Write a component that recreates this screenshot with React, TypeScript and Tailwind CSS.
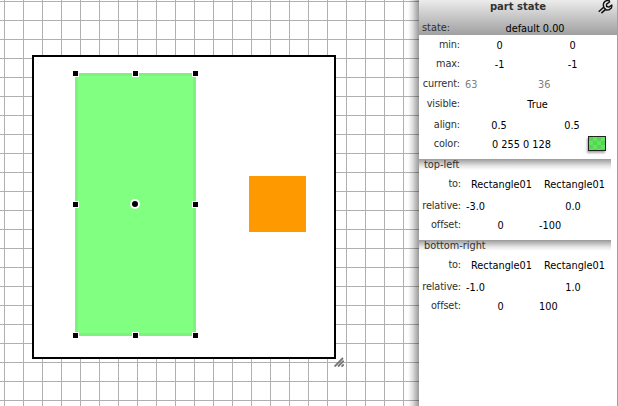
import React from "react";

type Align = "left" | "center";
type Value = { text: string; align?: Align; muted?: boolean; shift?: string };

function Cell({ text, align = "center", muted, shift = "" }: Value) {
  return (
    <span className={`whitespace-pre ${align === "left" ? "pl-[3px] text-left" : "text-center"} ${muted ? "text-[#808080]" : "text-black"} ${shift}`}>
      {text}
    </span>
  );
}

function Row({ label, values, height, wide }: { label: string; values: Value[]; height: string; wide?: boolean }) {
  return (
    <div className={`grid ${wide ? "grid-cols-[41px_149px]" : "grid-cols-[41px_73px_73px]"} gap-x-[3px] leading-[12px] ${height}`}>
      <span className="-mt-px justify-self-end whitespace-nowrap tracking-[-0.15px] text-[#303030]">{label}</span>
      {wide ? (
        values.map((v, i) => <Cell key={i} {...v} />)
      ) : (
        <div className="col-span-2 grid w-[146px] grid-cols-2">
          {values.map((v, i) => <Cell key={i} {...v} />)}
        </div>
      )}
    </div>
  );
}

function Section({ title, children }: { title: string; children: React.ReactNode }) {
  return (
    <section className="h-[81px] shrink-0">
      <div className="h-[20px] w-[192px] bg-[linear-gradient(to_bottom,#999_0,#bbb_3px,#e6e6e6_7px,#fff_11px)] pl-[5px] leading-[12px] text-[#303030]">
        {title}
      </div>
      <div className="pl-px">{children}</div>
    </section>
  );
}

function Handle({ pos }: { pos: string }) {
  return <i className={`absolute size-[7px] border border-white bg-black ${pos}`} />;
}

function Canvas() {
  return (
    <div className="relative h-full w-[419px] shrink-0 overflow-hidden bg-white bg-[linear-gradient(to_right,#b0b0b0_1px,transparent_1px),linear-gradient(to_bottom,#b0b0b0_1px,transparent_1px)] bg-[size:19px_19px] bg-[position:4px_1px]">
      <div className="absolute top-[55px] left-[32px] size-[304px] border-2 border-black bg-white" />
      <div className="absolute top-[176px] left-[249px] h-[56px] w-[57px] bg-[#ff9900]" />
      <div className="absolute top-[73px] left-[75px] h-[263px] w-[121px] border-[3px] border-[#80f080] bg-[#80ff80]" />
      <Handle pos="left-[72px] top-[70px]" />
      <Handle pos="left-[132px] top-[70px]" />
      <Handle pos="left-[192px] top-[70px]" />
      <Handle pos="left-[72px] top-[201px]" />
      <Handle pos="left-[192px] top-[201px]" />
      <Handle pos="left-[72px] top-[332px]" />
      <Handle pos="left-[132px] top-[332px]" />
      <Handle pos="left-[192px] top-[332px]" />
      <i className="absolute top-[199px] left-[130px] size-[10px] rounded-full border-2 border-white bg-black" />
      <svg className="absolute top-[357px] left-[334px]" width="10" height="10" viewBox="0 0 10 10" fill="none" stroke="#777" strokeWidth="1.9">
        <path d="M.5 9.5 9 1M4 9.5 9.8 3.7M7.5 9.6l2.3-2.3" />
      </svg>
      <div className="absolute inset-y-0 right-0 w-[11px] bg-[linear-gradient(to_right,rgba(0,0,0,0),rgba(0,0,0,0.12)_40%,rgba(0,0,0,0.4))]" />
    </div>
  );
}

function Wrench() {
  return (
    <svg className="absolute top-0 left-[179px]" width="15" height="14" viewBox="0 0 15 14" fill="none" stroke="#111" strokeWidth="1.45" strokeLinejoin="round">
      <path fill="#e8e8e8" d="M11 .2C8 .1 5.3 2 5.3 5L6 7.8 8.2 10l2.7-.1L13.4 8l.5-2.9-3 2-2.3-.6-.1-2.3L11.6 2z" />
      <path d="M5.6 7.2.7 11.7M7.9 9.1l-4.5 4" />
    </svg>
  );
}

export default function App() {
  return (
    <div className="flex h-[406px] w-[618px] overflow-hidden bg-white font-['DejaVu_Sans',sans-serif] text-[9.75px]">
      <Canvas />
      <aside className="flex w-[199px] flex-col border-r border-[#a0a0a0] bg-white">
        <header className="relative h-[35px] shrink-0 bg-linear-to-b from-[#ececec] to-[#a0a0a0]">
          <h1 className="pt-px text-center text-[10px] leading-[12px] font-bold text-[#333]">part state</h1>
          <Wrench />
          <div className="mt-[10px] flex leading-[12px]">
            <span className="-mt-px w-[31px] pl-[3px] text-[#303030]">state:</span>
            <span className="flex-1 pl-[3px] text-center text-black">default 0.00</span>
          </div>
        </header>
        <div className="h-[124px] shrink-0 pt-[5px]">
          <Row label="min:" height="h-[19px]" values={[{ text: "0" }, { text: "0" }]} />
          <Row label="max:" height="h-[20px]" values={[{ text: "-1" }, { text: "-1" }]} />
          <Row label="current:" height="h-[20px]" values={[{ text: "63", align: "left", muted: true, shift: "-ml-px" }, { text: "36", align: "left", muted: true, shift: "-ml-px" }]} />
          <Row label="visible:" height="h-[21px]" wide values={[{ text: "True" }]} />
          <Row label="align:" height="h-[19px]" values={[{ text: "0.5", shift: "pr-px" }, { text: "0.5", shift: "pr-px" }]} />
          <div className="flex h-[20px]">
            <Row label="color:" height="h-[12px]" wide values={[{ text: "0 255 0 128", shift: "pr-[32px]" }]} />
            <span className="-mt-[3px] -ml-[24px] h-[15px] w-[18px] shrink-0 border border-[#222] bg-[conic-gradient(#62e362_25%,#54d654_0_50%,#62e362_0_75%,#54d654_0)] bg-[size:8px_8px] shadow-[-1px_2px_2px_rgba(0,0,0,0.35)]" />
          </div>
        </div>
        <Section title="top-left">
          <Row label="to:" height="h-[22px]" values={[{ text: "Rectangle01", shift: "pl-[2px]" }, { text: "Rectangle01", shift: "pl-[2px]" }]} />
          <Row label="relative:" height="h-[19px]" values={[{ text: "-3.0", align: "left", shift: "-ml-px" }, { text: "0.0", shift: "pr-px" }]} />
          <Row label="offset:" height="h-[20px]" values={[{ text: "0" }, { text: "-100", align: "left", shift: "-ml-px" }]} />
        </Section>
        <Section title="bottom-right">
          <Row label="to:" height="h-[22px]" values={[{ text: "Rectangle01", shift: "pl-[2px]" }, { text: "Rectangle01", shift: "pl-[2px]" }]} />
          <Row label="relative:" height="h-[19px]" values={[{ text: "-1.0", align: "left", shift: "-ml-px" }, { text: "1.0", shift: "pr-px" }]} />
          <Row label="offset:" height="h-[20px]" values={[{ text: "0" }, { text: "100", align: "left", shift: "-ml-px" }]} />
        </Section>
      </aside>
    </div>
  );
}
